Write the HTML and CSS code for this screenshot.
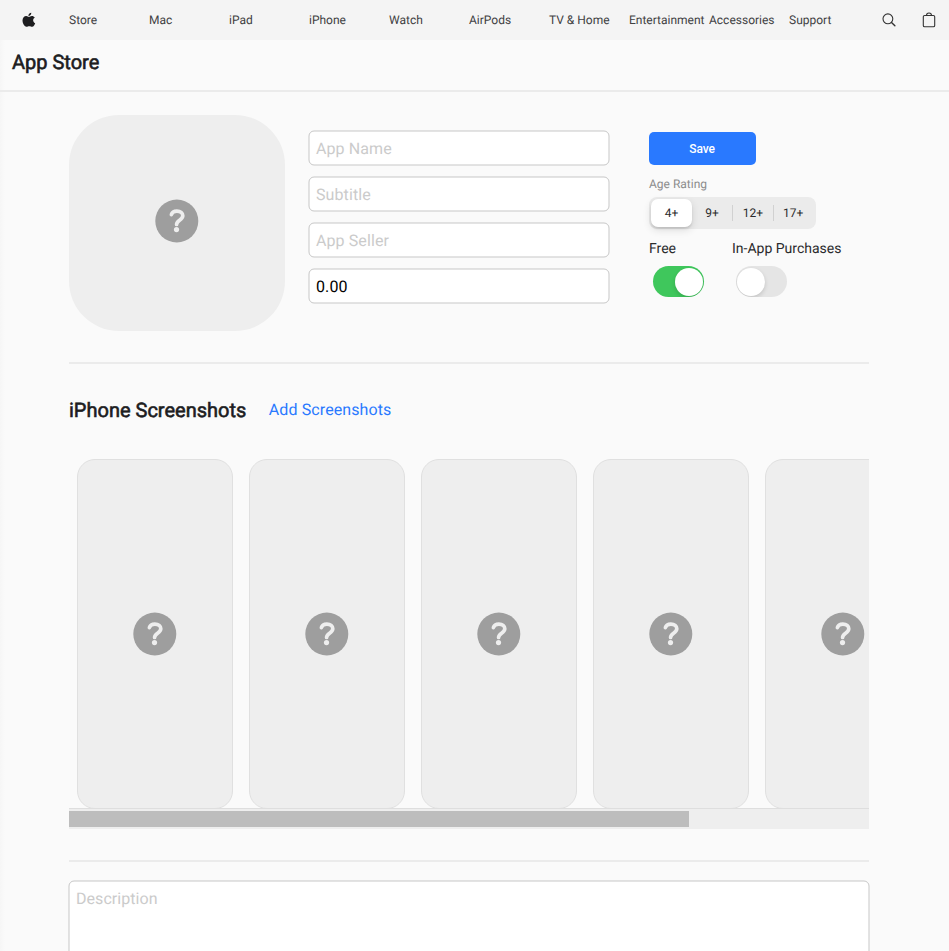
FILE: index.html
```html
<!DOCTYPE html>
<html lang="en">
<head>
<meta charset="utf-8">
<title>App Store</title>
<link rel="stylesheet" href="styles.css">
</head>
<body>
<svg class="defs" width="0" height="0" aria-hidden="true">
  <symbol id="help" viewBox="0 0 44 44">
    <circle cx="21.800" cy="22" r="21.500" fill="#9e9e9e"/>
    <path d="M16.400 15.600c.7-2.400 2.800-3.500 5.500-3.500 3.600 0 5.900 1.800 5.900 4.700 0 4.300-6.200 4.600-6.200 8.600" fill="none" stroke="#eee" stroke-width="3.700" stroke-linecap="round" stroke-linejoin="round"/>
    <circle cx="21.500" cy="30.600" r="2.600" fill="#eee"/>
  </symbol>
</svg>
<nav class="nav">
  <a class="logo"><svg width="14" height="16" viewBox="0 0 14 16"><path d="M9.300.7c.1 1.700-1.200 3.200-2.900 3.200C6.300 2.300 7.700.9 9.300.7zM7 4.900c.6 0 1.500-.8 2.900-.8 1.100 0 2.200.6 2.900 1.500-2.400 1.500-2 4.600.4 5.600-.4 1.200-1.500 3.600-3.100 3.600-1.100 0-1.500-.6-2.800-.6s-1.800.6-2.800.6C2.600 14.800.5 11.500.5 8.600c0-2.700 1.700-4.500 3.700-4.500 1.300 0 2.200.8 2.800.8z" fill="#1d1d1f"/></svg></a>
  <a>Store</a><a>Mac</a><a>iPad</a><a>iPhone</a><a>Watch</a><a>AirPods</a><a>TV &amp; Home</a><a>Entertainment</a><a>Accessories</a><a>Support</a>
  <span class="tools">
    <svg width="14" height="14" viewBox="0 0 14 14" fill="none" stroke="#333" stroke-width="1.100" stroke-linecap="round"><circle cx="5.900" cy="5.800" r="4.900"/><path d="M9.500 9.400l3.400 3.300" stroke-width="1.400"/></svg>
    <svg width="14" height="16" viewBox="0 0 14 16" fill="none" stroke="#333" stroke-width="1.100"><rect x="1.300" y="3.500" width="11.400" height="11.200" rx="1.300"/><path d="M4.500 3.500c0-1.500 1-2.500 2.500-2.500s2.500 1 2.500 2.500"/></svg>
  </span>
</nav>
<header class="title"><h1>App Store</h1></header>
<main class="content">
  <section class="app">
    <div class="icon"><svg class="help"><use href="#help"/></svg></div>
    <div class="fields">
      <div class="field"><svg class="outline"><rect width="300" height="34" rx="5"/></svg>App Name</div>
      <div class="field"><svg class="outline"><rect width="300" height="34" rx="5"/></svg>Subtitle</div>
      <div class="field"><svg class="outline"><rect width="300" height="34" rx="5"/></svg>App Seller</div>
      <div class="field filled"><svg class="outline"><rect width="300" height="34" rx="5"/></svg>0.00</div>
    </div>
    <div class="options">
      <button class="save">Save</button>
      <div class="label">Age Rating</div>
      <div class="segments"><span class="on">4+</span><span>9+</span><span>12+</span><span>17+</span></div>
      <div class="switches">
        <div class="option"><span>Free</span><i class="switch checked"></i></div>
        <div class="option"><span>In-App Purchases</span><i class="switch"></i></div>
      </div>
    </div>
  </section>
  <section class="shots">
    <div class="heading"><h2>iPhone Screenshots</h2><a>Add Screenshots</a></div>
    <div class="strip">
      <div class="shot"><svg class="help"><use href="#help"/></svg></div>
      <div class="shot"><svg class="help"><use href="#help"/></svg></div>
      <div class="shot"><svg class="help"><use href="#help"/></svg></div>
      <div class="shot"><svg class="help"><use href="#help"/></svg></div>
      <div class="shot"><svg class="help"><use href="#help"/></svg></div>
    </div>
    <div class="track"><div class="thumb"></div></div>
  </section>
  <section class="description"><svg class="outline"><rect width="800" height="200" rx="5"/></svg>Description</section>
</main>
</body>
</html>
```
FILE: styles.css
```css
* { box-sizing: border-box; }
html { overflow: hidden; }
body { margin: 0; height: 951px; overflow: hidden; background: linear-gradient(90deg, #f6f6f6, #fafafa 5px); color: #2b2b2d; font-family: Roboto, sans-serif; text-rendering: geometricPrecision; }
.defs { position: absolute; }
h1, h2 { margin: 0; font-size: 20px; font-weight: 400; line-height: 24px; color: #1d1d1f; -webkit-text-stroke: .6px #1d1d1f; }
.nav { height: 40px; display: flex; align-items: center; background: #f4f4f4; font-size: 12px; color: #414143; }
.nav a { width: 80px; flex: none; white-space: nowrap; }
.nav .logo { width: 69px; height: 16px; padding-left: 22px; }
.nav svg { display: block; }
.tools { display: flex; align-items: center; gap: 26px; margin-left: 13px; }
.title { height: 52px; padding: 10px 12px; border-bottom: 2px solid #ebebeb; }
.content { width: 800px; margin-left: 69px; }
.app { height: 272px; padding-top: 23px; display: flex; border-bottom: 2px solid #ebebeb; }
.icon { width: 216px; height: 216px; border-radius: 50px; background: #eee; display: flex; align-items: center; justify-content: center; }
.help { width: 44px; height: 44px; display: block; flex: none; }
.icon .help { margin-top: -4px; }
.fields { width: 300px; margin: 16px 40px 0 24px; display: flex; flex-direction: column; gap: 12px; }
.field { position: relative; height: 34px; padding-left: 7px; line-height: 36px; font-size: 16px; letter-spacing: .1px; color: #cbcbcb; }
.filled { color: #000; }
.outline { position: absolute; inset: 0; width: 100%; height: 100%; overflow: visible; z-index: -1; fill: #fff; stroke: #c7c7c7; }
.options { padding-top: 17px; }
.save { display: block; width: 107px; height: 33px; padding: 0 1px 0 0; border: 0; border-radius: 5px; background: #2979ff; color: #fff; font: 500 12px Roboto, sans-serif; letter-spacing: -.1px; }
.label { margin-top: 12px; font-size: 12px; line-height: 14px; color: #8c8c8c; }
.segments { width: 167px; height: 32px; margin-top: 6px; padding: 2px; border-radius: 8px; background: #ebebeb; display: flex; align-items: center; font-size: 12px; }
.segments span { width: 40.300px; height: 16px; line-height: 16px; text-align: center; }
.segments span + span + span { border-left: 1px solid #d1d1d1; }
.segments .on { width: 41px; height: 28px; line-height: 28px; border-radius: 7px; background: #fff; box-shadow: 0 3px 8px rgba(0,0,0,.12), 0 2px 2px rgba(0,0,0,.1); }
.switches { display: flex; margin-top: 12px; }
.option { width: 83px; white-space: nowrap; font-size: 14px; line-height: 17px; }
.switch { display: block; width: 51px; height: 31px; margin: 8px 0 0 4px; padding: 1px; border-radius: 16px; background: #e5e5e5; overflow: hidden; }
.switch::before { content: ""; display: block; width: 28px; height: 28px; margin-top: .500px; border-radius: 50%; background: #fff; box-shadow: 0 2px 4px rgba(0,0,0,.15); }
.checked { background: #3fc75c; }
.checked::before { margin-left: 20.500px; }
.heading { display: flex; align-items: center; gap: 22.500px; height: 90px; }
.heading h2 { padding-top: 2px; }
.heading a { font-size: 16px; color: #2979ff; letter-spacing: .1px; }
.strip { height: 354px; padding: 5px 0 0 8px; display: flex; gap: 16px; overflow: hidden; }
.shot { flex: none; width: 156px; height: 350px; border: 1px solid #e0e0e0; border-radius: 18px; background: #eee; display: flex; align-items: center; justify-content: center; }
.track { height: 21px; padding-top: 2px; background: #eee; border-top: 1px solid #dedede; }
.thumb { width: 620px; height: 16px; background: #bdbdbd; }
.description { position: relative; margin-top: 52px; height: 70px; padding: 8px 7px; font-size: 16px; line-height: 20px; letter-spacing: .05px; color: #cbcbcb; }
.description::before { content: ""; position: absolute; left: 0; right: 0; top: -21px; height: 2px; background: #ebebeb; }
```
